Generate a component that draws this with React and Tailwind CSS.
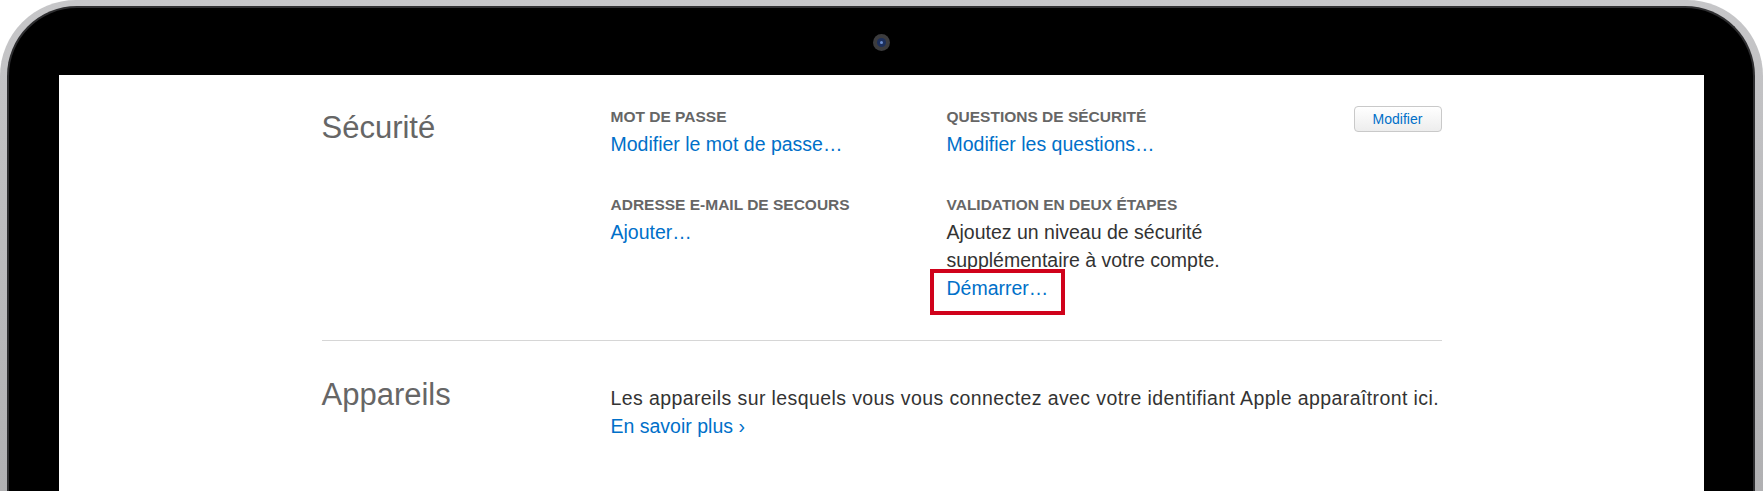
import React from 'react';

const font = "font-['Liberation_Sans',Arial,sans-serif]";

function Field({ label, children }) {
  return (
    <div>
      <div className="text-[15.5px] leading-[20px] font-bold uppercase text-[#666]">{label}</div>
      <div className="mt-[2.5px] text-[19.5px] leading-[28px]">{children}</div>
    </div>
  );
}

function Link({ children }) {
  return <a href="#" className="text-[#0070c9]">{children}</a>;
}

export default function App() {
  return (
    <div className={`w-[1763px] h-[491px] overflow-hidden bg-white ${font}`}>
      {/* laptop bezel */}
      <div className="h-full flex flex-col rounded-t-[76px] bg-linear-to-b from-[#c6c6c8] to-[#b0b0b2] pt-[6px] pl-[7px] pr-[8px]">
        <div className="flex-1 flex flex-col rounded-t-[70px] bg-black border-t-2 border-x-2 border-[#2e2e30]">
          <div className="h-[67px] flex justify-center">
            <div className="mt-[26px] w-[17px] h-[17px] rounded-full bg-[#3c3c3e] flex items-center justify-center">
              <div className="w-[9px] h-[9px] rounded-full bg-[#1c2f5c] flex items-center justify-center">
                <div className="w-[3px] h-[3px] rounded-full bg-[#6d8fd0]" />
              </div>
            </div>
          </div>

          {/* screen */}
          <div className="flex-1 ml-[50px] mr-[49px] bg-white">
            <div className="w-[1120px] mx-auto">
              {/* Sécurité */}
              <section className="flex items-start border-b border-[#d6d6d6] pt-[32px] pb-[38px]">
                <h2 className="w-[289px] text-[31px] leading-[41px] text-[#666]">Sécurité</h2>
                <div className="flex-1 grid grid-cols-[336px_1fr] gap-y-[37.5px] text-[#333]">
                  <Field label="Mot de passe">
                    <Link>Modifier le mot de passe…</Link>
                  </Field>
                  <Field label="Questions de sécurité">
                    <Link>Modifier les questions…</Link>
                  </Field>
                  <Field label="Adresse e-mail de secours">
                    <Link>Ajouter…</Link>
                  </Field>
                  <Field label="Validation en deux étapes">
                    <p>Ajoutez un niveau de sécurité</p>
                    <p>supplémentaire à votre compte.</p>
                    <span className="relative inline-block">
                      <Link>Démarrer…</Link>
                      <span className="absolute -left-[17px] -right-[17px] -top-[5px] -bottom-[13px] border-4 border-[#d0021b]" />
                    </span>
                  </Field>
                </div>
                <button className="-mt-[1px] w-[88px] h-[26px] flex items-center justify-center rounded-[4px] border border-[#c9c9c9] bg-linear-to-b from-white to-[#ededed] text-[14px] text-[#0070c9]">
                  Modifier
                </button>
              </section>

              {/* Appareils */}
              <section className="flex items-start pt-[33px]">
                <h2 className="w-[289px] text-[31px] leading-[41px] text-[#666]">Appareils</h2>
                <div className="mt-[10px] text-[19.5px] leading-[28px] text-[#333]">
                  <p className="tracking-[0.4px]">Les appareils sur lesquels vous vous connectez avec votre identifiant Apple apparaîtront ici.</p>
                  <Link>En savoir plus ›</Link>
                </div>
              </section>
            </div>
          </div>
        </div>
      </div>
    </div>
  );
}
